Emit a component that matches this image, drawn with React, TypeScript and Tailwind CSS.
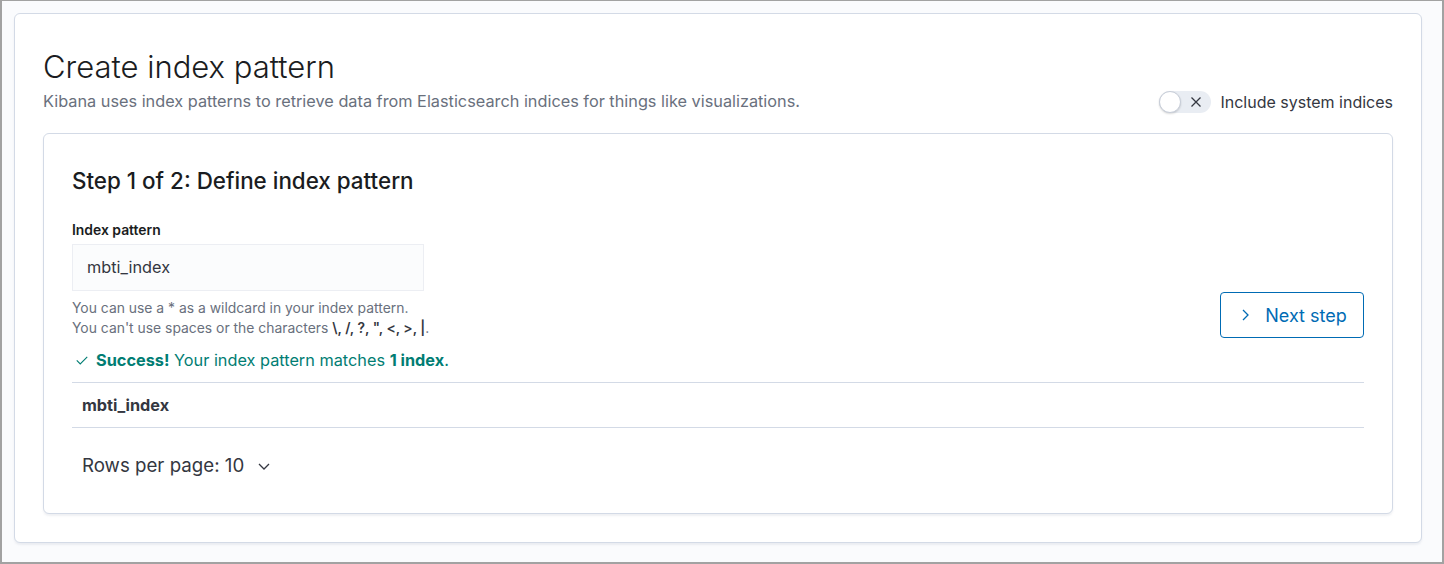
import React from "react";

const font = { fontFamily: "Inter, 'Noto Sans', sans-serif" };

function CheckIcon() {
  return (
    <svg width="14" height="14" viewBox="0 0 16 16" className="text-[#017d73]">
      <path d="M2 8.5 L6 12.5 L14 4.5" fill="none" stroke="currentColor" strokeWidth="1.3" />
    </svg>
  );
}

function ChevronRight() {
  return (
    <svg width="16" height="16" viewBox="0 0 16 16">
      <path d="M6 3 L11 8 L6 13" fill="none" stroke="currentColor" strokeWidth="1.3" />
    </svg>
  );
}

function ChevronDown() {
  return (
    <svg width="16" height="16" viewBox="0 0 16 16">
      <path d="M3 6 L8 11 L13 6" fill="none" stroke="currentColor" strokeWidth="1.3" />
    </svg>
  );
}

function Toggle() {
  return (
    <div className="flex items-center gap-[9px]">
      <div className="relative h-[22px] w-[52px] rounded-full bg-[#e9edf3]">
        <div className="absolute left-0 top-0 h-[22px] w-[22px] rounded-full border border-[#c7cdd8] bg-white shadow-[0_1px_2px_rgba(0,0,0,0.15)]" />
        <svg className="absolute right-[9px] top-[5px] text-[#343741]" width="12" height="12" viewBox="0 0 12 12">
          <path d="M1.5 1.5 L10.5 10.5 M10.5 1.5 L1.5 10.5" stroke="currentColor" strokeWidth="1.3" />
        </svg>
      </div>
      <span className="text-[16px] text-[#343741]">Include system indices</span>
    </div>
  );
}

export default function App() {
  return (
    <div style={font} className="h-[564px] w-[1444px] border-b-2 border-l-2 border-r-2 border-t border-[#a2a2a2] bg-[#fafbfd] pl-3 pt-3">
      <div className="w-[1408px] rounded-[6px] border border-[#d3dae6] bg-white p-7 shadow-[0_2px_2px_rgba(152,162,179,0.15)]">
        <div className="flex items-end justify-between">
          <div>
            <h1 className="mt-[5px] text-[31px] font-light leading-[40px] text-[#1a1c21]">Create index pattern</h1>
            <p className="mt-[2px] text-[16.3px] leading-[24px] text-[#69707d]">
              Kibana uses index patterns to retrieve data from Elasticsearch indices for things like visualizations.
            </p>
          </div>
          <div className="mb-[-1px]">
            <Toggle />
          </div>
        </div>

        <div className="mt-[20px] rounded-[6px] border border-[#d3dae6] bg-white p-7 shadow-[0_2px_2px_rgba(152,162,179,0.15)]">
          <h2 className="mt-[3px] text-[22.4px] font-medium leading-[32px] text-[#1a1c21]">Step 1 of 2: Define index pattern</h2>

          <div className="flex items-start justify-between">
            <div className="mt-[24px]">
              <label className="block text-[13.9px] font-semibold leading-[18px] text-[#1a1c21]">Index pattern</label>
              <div className="mt-[5px] flex h-[47px] w-[352px] items-center border border-[#eceef3] bg-[#fbfcfd] px-[14px] text-[16.3px] text-[#343741]">
                mbti_index
              </div>
              <div className="mt-[7px] text-[13.9px] leading-[20px] text-[#69707d]">
                <p>You can use a * as a wildcard in your index pattern.</p>
                <p>
                  You can't use spaces or the characters <b className="font-semibold text-[#343741]">\, /, ?, ", &lt;, &gt;, |</b>.
                </p>
              </div>
            </div>
            <button className="mt-[95px] flex h-[46px] w-[144px] items-center justify-center gap-[12px] rounded-[4px] border border-[#006bb4] bg-white text-[18px] text-[#006bb4]">
              <ChevronRight />
              <span>Next step</span>
            </button>
          </div>

          <div className="mt-[10px] flex items-center gap-[7px] pl-[3px] text-[16.3px] leading-[24px] text-[#017d73]">
            <CheckIcon />
            <span>
              <b className="font-bold">Success!</b> Your index pattern matches <b className="font-bold">1 index</b>.
            </span>
          </div>

          <div className="mt-[10px] border-b border-t border-[#d3dae6]">
            <div className="flex h-[44px] items-center px-[10px] text-[16.3px] font-bold text-[#343741]">mbti_index</div>
          </div>

          <div className="mt-[24px] mb-[5px] flex items-center gap-[12px] px-[10px] text-[18.7px] text-[#343741]">
            <span>Rows per page: 10</span>
            <ChevronDown />
          </div>
        </div>
      </div>
    </div>
  );
}
